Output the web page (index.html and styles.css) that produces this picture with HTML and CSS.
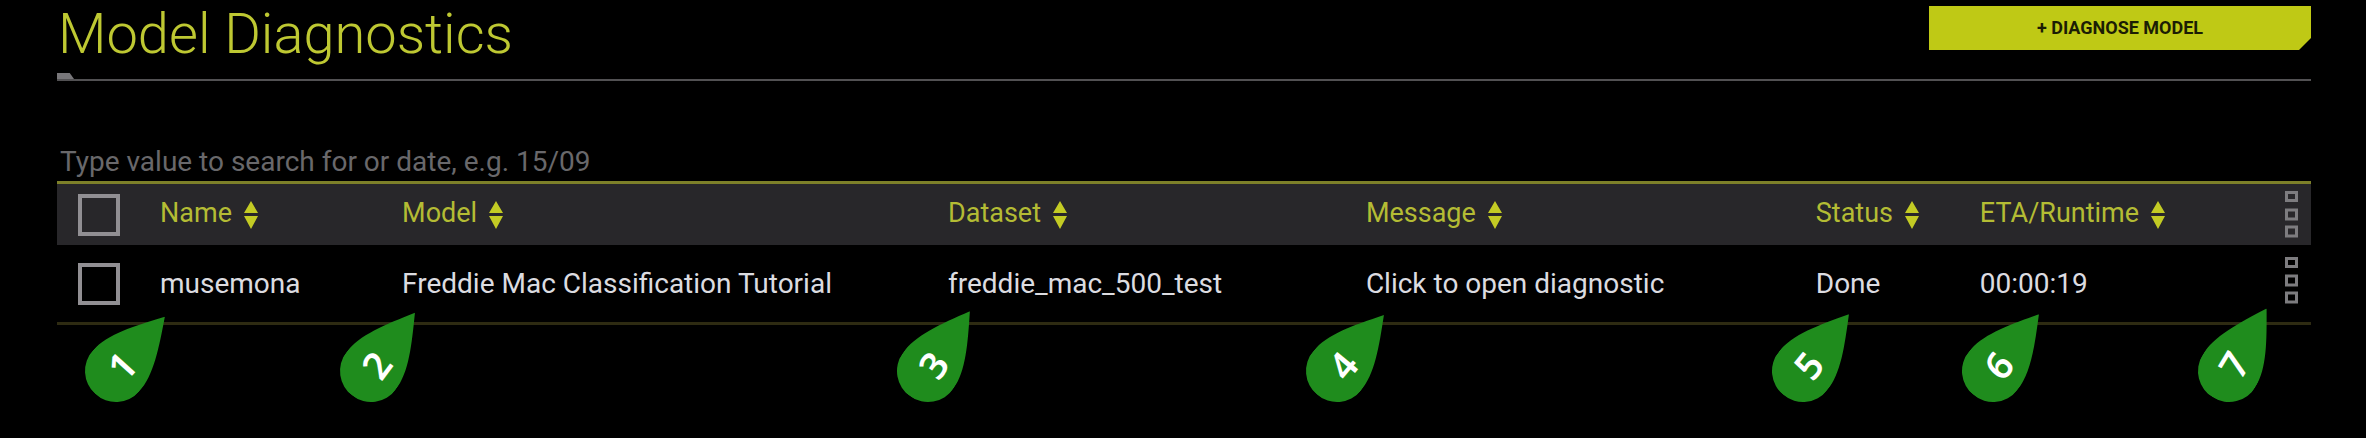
FILE: index.html
```html
<!DOCTYPE html>
<html lang="en">
<head>
<meta charset="utf-8">
<title>Model Diagnostics</title>
<link rel="stylesheet" href="styles.css">
</head>
<body>
<svg class="defs" aria-hidden="true">
  <symbol id="sort" viewBox="0 0 14 28"><path d="M7 0 14 12H0zM0 15h14L7 28z"/></symbol>
  <symbol id="more" viewBox="0 0 13 47"><path d="M1.500 1.500h10v8h-10zM1.500 19h10v9h-10zM1.500 36h10v9h-10z"/></symbol>
  <symbol id="drop" viewBox="-31 -31 104 62"><path d="M73 0C45 17 22 31 0 31A31 31 0 0 1 0-31C22-31 45-17 73 0z"/></symbol>
</svg>
<main class="page">
  <header class="page-header">
    <h1 class="title">Model Diagnostics</h1>
    <button class="diagnose" type="button">+ DIAGNOSE MODEL</button>
  </header>
  <input class="search" type="text" aria-label="Search diagnostics" placeholder="Type value to search for or date, e.g. 15/09">
  <div class="table-wrap">
    <table class="table">
      <colgroup>
        <col class="col-check"><col class="col-name"><col class="col-model"><col class="col-dataset"><col class="col-message"><col class="col-status"><col class="col-runtime">
      </colgroup>
      <thead>
        <tr>
          <th class="check-cell"><input class="check" type="checkbox" aria-label="Select all"></th>
          <th><button class="sort" type="button">Name<svg class="sort-icon"><use href="#sort"/></svg></button></th>
          <th><button class="sort" type="button">Model<svg class="sort-icon"><use href="#sort"/></svg></button></th>
          <th><button class="sort" type="button">Dataset<svg class="sort-icon"><use href="#sort"/></svg></button></th>
          <th><button class="sort" type="button">Message<svg class="sort-icon"><use href="#sort"/></svg></button></th>
          <th><button class="sort" type="button">Status<svg class="sort-icon"><use href="#sort"/></svg></button></th>
          <th>
            <div class="last-cell">
              <button class="sort" type="button">ETA/Runtime<svg class="sort-icon"><use href="#sort"/></svg></button>
              <button class="more" type="button" aria-label="Table menu"><svg class="more-icon"><use href="#more"/></svg></button>
            </div>
          </th>
        </tr>
      </thead>
      <tbody>
        <tr>
          <td class="check-cell"><input class="check" type="checkbox" aria-label="Select musemona"></td>
          <td>musemona</td>
          <td>Freddie Mac Classification Tutorial</td>
          <td>freddie_mac_500_test</td>
          <td>Click to open diagnostic</td>
          <td>Done</td>
          <td>
            <div class="last-cell">
              <span>00:00:19</span>
              <button class="more row-more" type="button" aria-label="Row menu"><svg class="more-icon"><use href="#more"/></svg></button>
            </div>
          </td>
        </tr>
      </tbody>
    </table>
    <div class="pin pin-1"><svg class="pin-shape"><use href="#drop"/></svg><span class="pin-number">1</span></div>
    <div class="pin pin-2"><svg class="pin-shape"><use href="#drop"/></svg><span class="pin-number">2</span></div>
    <div class="pin pin-3"><svg class="pin-shape"><use href="#drop"/></svg><span class="pin-number">3</span></div>
    <div class="pin pin-4"><svg class="pin-shape"><use href="#drop"/></svg><span class="pin-number">4</span></div>
    <div class="pin pin-5"><svg class="pin-shape"><use href="#drop"/></svg><span class="pin-number">5</span></div>
    <div class="pin pin-6"><svg class="pin-shape"><use href="#drop"/></svg><span class="pin-number">6</span></div>
    <div class="pin pin-7"><svg class="pin-shape"><use href="#drop"/></svg><span class="pin-number">7</span></div>
  </div>
</main>
</body>
</html>
```
FILE: styles.css
```css
* { box-sizing: border-box; }

body {
  margin: 0;
  background: #000;
  color: #dcdce0;
  font-family: Roboto, "Liberation Sans", sans-serif;
  font-size: 28px;
  font-weight: 400;
}

button, input { font: inherit; color: inherit; }

button {
  padding: 0;
  border: 0;
  background: none;
  cursor: pointer;
}

.defs { position: absolute; width: 0; height: 0; }

.page {
  min-height: 100vh;
  padding: 0 55px 0 57px;
}

.page-header {
  position: relative;
  display: flex;
  justify-content: space-between;
  align-items: flex-start;
  padding-bottom: 11px;
  border-bottom: 2px solid #525153;
}

/* Angled tab at the left end of the rule */
.page-header::after {
  content: "";
  position: absolute;
  left: 0;
  bottom: 0;
  width: 17px;
  height: 6px;
  background: #78777a;
  clip-path: polygon(0 0, 75% 0, 100% 100%, 0 100%);
}

.title {
  margin: 0;
  padding-left: 1px;
  color: #bec832;
  font-size: 56px;
  font-weight: 300;
  line-height: 68px;
}

.diagnose {
  width: 382px;
  height: 44px;
  margin-top: 6px;
  padding-bottom: 2px;
  background: #bfc915;
  color: #1c1d04;
  font-size: 18px;
  font-weight: 700;
  clip-path: polygon(0 0, 100% 0, 100% calc(100% - 12px), calc(100% - 12px) 100%, 0 100%);
}

.search {
  display: block;
  width: 100%;
  height: 40px;
  margin-top: 60px;
  padding: 0 3px;
  border: 0;
  outline: 0;
  background: transparent;
}

.search::placeholder { color: #69686b; opacity: 1; }

.table-wrap { position: relative; }

.table {
  width: 100%;
  table-layout: fixed;
  border-collapse: separate;
  border-spacing: 0;
  border-top: 3px solid #7d8029;
  border-bottom: 3px solid #2e2b12;
}

.col-check { width: 4.57%; }
.col-name { width: 10.74%; }
.col-model { width: 24.22%; }
.col-dataset { width: 18.54%; }
.col-message { width: 19.96%; }
.col-status { width: 7.28%; }
.col-runtime { width: 14.69%; }

th, td {
  padding: 0;
  text-align: left;
  vertical-align: middle;
  white-space: nowrap;
}

th {
  height: 61px;
  background: #28272a;
  color: #b4bc34;
  font-size: 27px;
  font-weight: 400;
}

td { height: 77px; }

.check-cell { padding-left: 21px; }

.check {
  display: block;
  appearance: none;
  width: 42px;
  height: 42px;
  margin: 0;
  border: 4px solid #918f93;
}

.sort {
  display: flex;
  align-items: center;
  gap: 12px;
  padding-bottom: 4px;
}

.sort-icon {
  width: 14px;
  height: 28px;
  margin-top: 4px;
  fill: #c3cb24;
}

.last-cell {
  display: flex;
  align-items: center;
  justify-content: space-between;
  padding-right: 13px;
}

.more { display: block; }

.row-more { padding-bottom: 6px; }

.more-icon {
  display: block;
  width: 13px;
  height: 47px;
  fill: none;
  stroke: #7d7c7f;
  stroke-width: 3;
}

/* Callout markers laid over the table; each turns about the centre of its round end */
.pin {
  position: absolute;
  top: 190px;
  width: 104px;
  height: 62px;
  margin: -31px 0 0 -31px;
  display: grid;
  align-items: center;
  transform: rotate(var(--turn));
  transform-origin: 31px 31px;
  pointer-events: none;
}

.pin-shape, .pin-number { grid-area: 1 / 1; }

.pin-shape { width: 104px; height: 62px; fill: #1f8c1d; }

.pin-number {
  z-index: 1;
  width: 78px;
  color: #fff;
  font-family: "Noto Sans", sans-serif;
  font-size: 38px;
  font-weight: 600;
  line-height: 38px;
  text-align: center;
}

.pin-1 { left: 2.62%; --turn: -48deg; }
.pin-2 { left: 13.93%; --turn: -53deg; }
.pin-3 { left: 38.64%; --turn: -55deg; }
.pin-4 { left: 56.77%; --turn: -50deg; }
.pin-5 { left: 77.46%; --turn: -51deg; }
.pin-6 { left: 85.87%; --turn: -51deg; }
.pin-7 { left: 96.36%; --turn: -59deg; }
```
